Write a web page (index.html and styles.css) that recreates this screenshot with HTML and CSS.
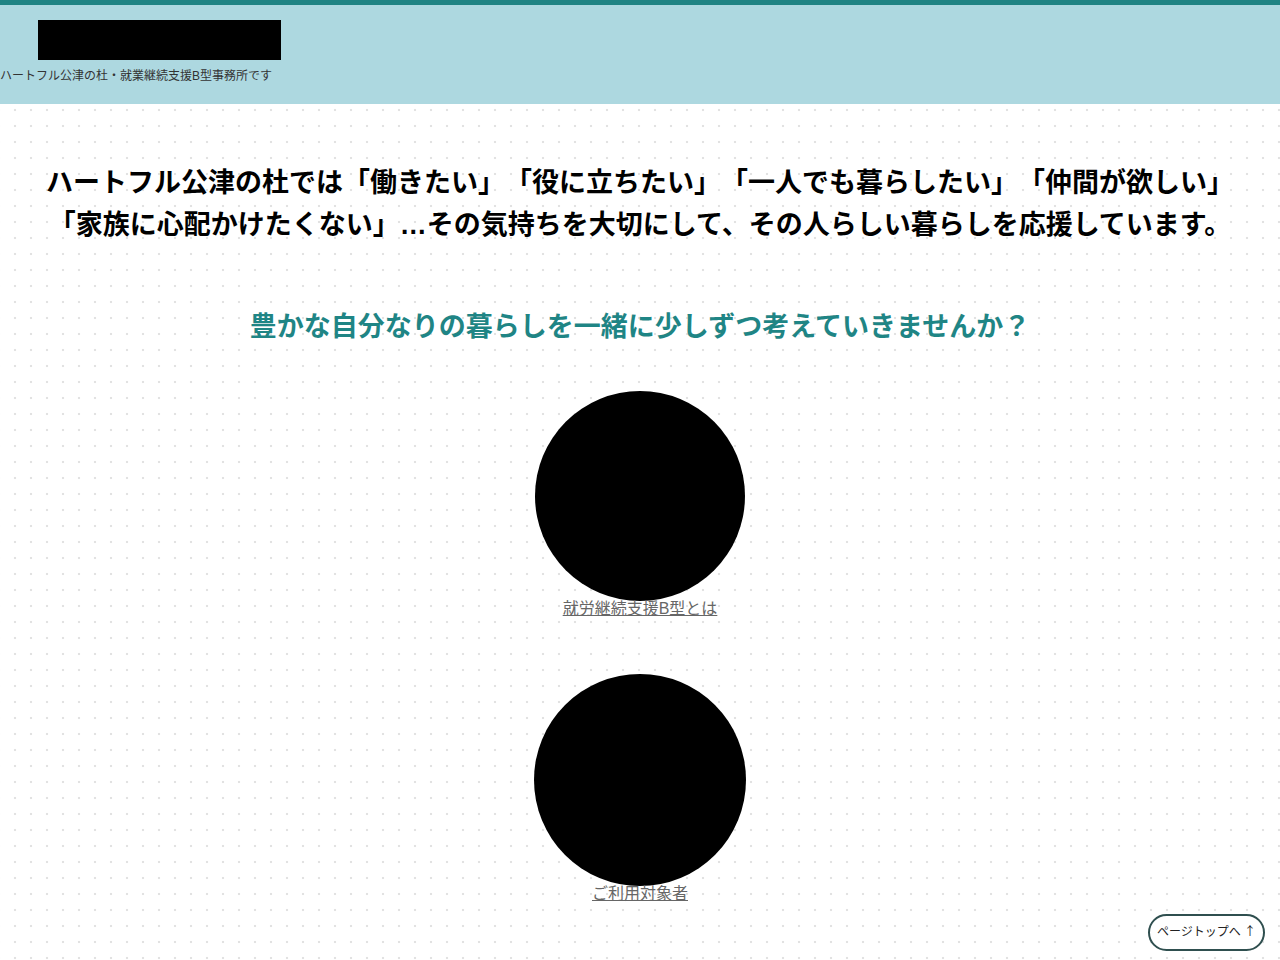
FILE: index.html
```html
<!DOCTYPE html>
<html lang="ja">
<head>
<meta charset="utf-8">
<title>ハートフル公津の杜</title>
<link rel="stylesheet" href="styles.css">
</head>
<body>
<header class="site-header">
  <div class="logo"></div>
  <p class="tagline">ハートフル公津の杜・就業継続支援B型事務所です</p>
</header>
<main class="main">
  <h1 class="lead">ハートフル公津の杜では「働きたい」「役に立ちたい」「一人でも暮らしたい」「仲間が欲しい」<br>「家族に心配かけたくない」…その気持ちを大切にして、その人らしい暮らしを応援しています。</h1>
  <h2 class="sub">豊かな自分なりの暮らしを一緒に少しずつ考えていきませんか？</h2>
  <nav class="menu">
    <div class="menu-item">
      <div class="circle"></div>
      <a class="menu-link" href="#">就労継続支援B型とは</a>
    </div>
    <div class="menu-item second">
      <div class="circle big"></div>
      <a class="menu-link" href="#">ご利用対象者</a>
    </div>
  </nav>
</main>
<a class="pagetop" href="#">ページトップへ <span class="arrow">↑</span></a>
</body>
</html>
```
FILE: styles.css
```css
html, body {
  margin: 0;
  padding: 0;
}
body {
  font-family: "Liberation Sans", "Noto Sans CJK JP", sans-serif;
  text-spacing-trim: space-all;
  background-color: #fff;
  background-image: radial-gradient(circle, #e2e2e2 0.9px, rgba(255,255,255,0) 1.6px);
  background-size: 16px 16px;
  background-position: 7px 6px;
  min-height: 960px;
  color: #000;
}
.site-header {
  background: #add8e0;
  border-top: 5px solid #1f8383;
  height: 99px;
  box-sizing: content-box;
}
.logo {
  width: 243px;
  height: 40px;
  background: #000;
  margin: 15px 0 0 38px;
}
.tagline {
  margin: 8px 0 0 0;
  font-size: 12px;
  line-height: 16px;
  color: #333;
}
.main {
  padding-top: 58px;
  text-align: center;
}
.lead {
  margin: 0;
  font-size: 27px;
  line-height: 42px;
  font-weight: bold;
  letter-spacing: 0;
}
.sub {
  margin: 61px 0 0;
  font-size: 27px;
  line-height: 40px;
  font-weight: bold;
  color: #1f8585;
}
.menu {
  display: flex;
  flex-direction: column;
  align-items: center;
  margin-top: 44px;
}
.menu-item {
  display: flex;
  flex-direction: column;
  align-items: center;
}
.menu-item.second {
  margin-top: 57px;
}
.circle {
  width: 210px;
  height: 210px;
  border-radius: 50%;
  background: #000;
}
.circle.big {
  width: 212px;
  height: 212px;
}
.menu-link {
  font-size: 16px;
  line-height: 16px;
  color: #666;
  text-decoration: underline;
}
.pagetop {
  position: fixed;
  right: 15px;
  bottom: 9px;
  width: 117px;
  height: 37px;
  box-sizing: border-box;
  border: 2px solid #2f4f4f;
  border-radius: 19px;
  background: #fff;
  color: #222;
  font-size: 12px;
  display: flex;
  align-items: center;
  justify-content: center;
  text-decoration: none;
  padding-bottom: 4px;
  white-space: pre;
}
.arrow {
  font-family: "Noto Sans CJK JP", sans-serif;
}
```
